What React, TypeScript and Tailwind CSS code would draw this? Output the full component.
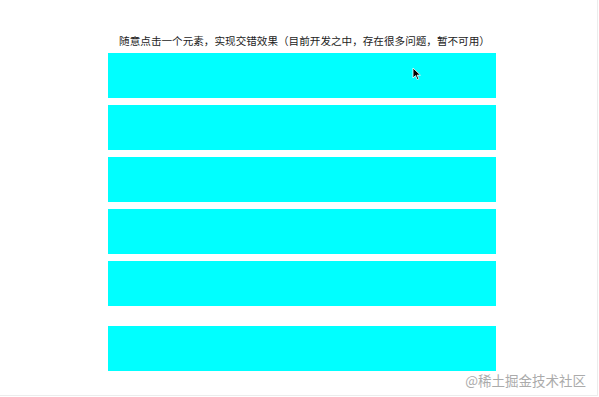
import React from "react";

export default function App() {
  const bars = [0, 1, 2, 3, 4];
  return (
    <div
      className="relative w-[598px] h-[396px] bg-white border-r border-b border-[#ececec] overflow-hidden"
      style={{ fontFamily: '"Noto Sans CJK SC", "Noto Sans", sans-serif' }}
    >
      <div className="ml-[108px] w-[388px] pt-[34px] flex flex-col">
        <div className="h-[14px] leading-[14px] text-[10.6px] text-[#222] text-center whitespace-nowrap mb-[5px] pl-[5px]">
          随意点击一个元素，实现交错效果（目前开发之中，存在很多问题，暂不可用）
        </div>
        <div className="flex flex-col gap-[7px]">
          {bars.map((b) => (
            <div key={b} className="h-[45px] bg-[#00ffff]" />
          ))}
        </div>
        <div className="h-[45px] bg-[#00ffff] mt-[20px]" />
      </div>
      <div className="absolute right-[11px] top-[371px] text-[13.5px] leading-[18px] text-[#ababab] whitespace-nowrap">
        @稀土掘金技术社区
      </div>
      <svg
        className="absolute left-[412px] top-[67px]"
        width="10"
        height="14"
        viewBox="0 0 10 14"
      >
        <path
          d="M1 1 L1 11 L3.5 8.6 L5.3 12.6 L6.8 11.9 L5.1 8.1 L8.4 8.1 Z"
          fill="#000"
          stroke="#fff"
          strokeWidth="0.8"
        />
      </svg>
    </div>
  );
}
